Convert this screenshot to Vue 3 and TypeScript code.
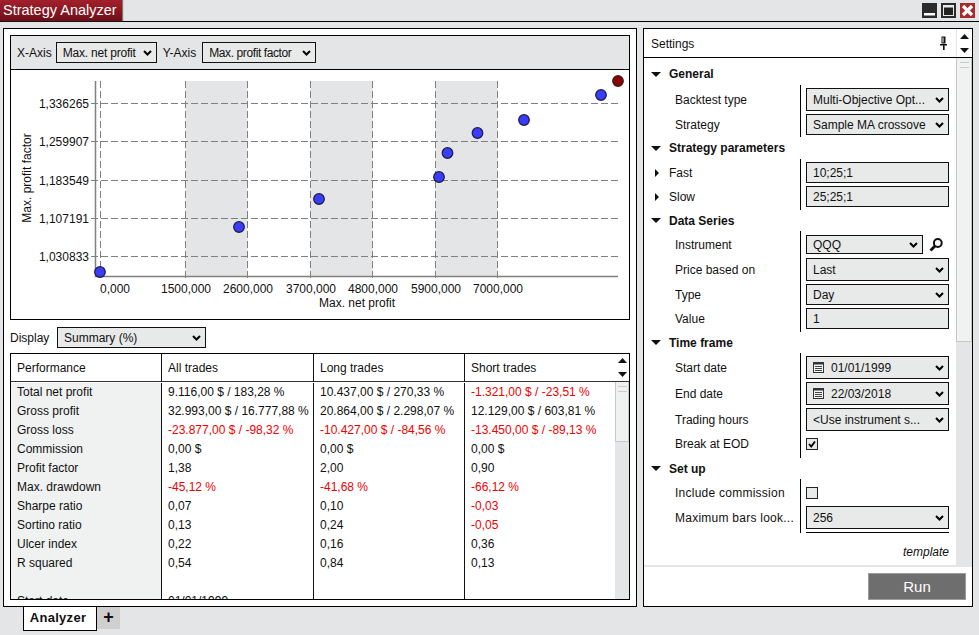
<script setup lang="ts">
type Row = { label: string; kind: string; value?: string; h: number; arrow?: boolean; checked?: boolean; wide?: boolean };
type Section = { title: string; head: number; pb: number; rows: Row[]; rule?: boolean };

const sections: Section[] = [
  { title: 'General', head: 22, pb: 2, rows: [
    { label: 'Backtest type', kind: 'select', value: 'Multi-Objective Opt...', h: 23 },
    { label: 'Strategy', kind: 'select', value: 'Sample MA crossove', h: 21 },
  ] },
  { title: 'Strategy parameters', head: 22, pb: 3, rows: [
    { label: 'Fast', kind: 'text', value: '10;25;1', h: 21, arrow: true },
    { label: 'Slow', kind: 'text', value: '25;25;1', h: 21, arrow: true },
  ] },
  { title: 'Data Series', head: 21, pb: 3, rows: [
    { label: 'Instrument', kind: 'search', value: 'QQQ', h: 21 },
    { label: 'Price based on', kind: 'select', value: 'Last', h: 23 },
    { label: 'Type', kind: 'select', value: 'Day', h: 21 },
    { label: 'Value', kind: 'text', value: '1', h: 21 },
  ] },
  { title: 'Time frame', head: 21, pb: 4, rows: [
    { label: 'Start date', kind: 'date', value: '01/01/1999', h: 23 },
    { label: 'End date', kind: 'date', value: '22/03/2018', h: 23 },
    { label: 'Trading hours', kind: 'select', value: '<Use instrument s...', h: 23 },
    { label: 'Break at EOD', kind: 'check', checked: true, h: 20 },
  ] },
  { title: 'Set up', head: 21, pb: 0, rule: true, rows: [
    { label: 'Include commission', kind: 'check', checked: false, h: 21, wide: true },
    { label: 'Maximum bars look...', kind: 'select', value: '256', h: 23, wide: true },
  ] },
];

type Cell = { t: string; neg?: boolean };
const c = (t: string): Cell => ({ t, neg: t.startsWith('-') });
const perf: { name: string; cells: Cell[] }[] = [
  { name: 'Total net profit', cells: [c('9.116,00 $ / 183,28 %'), c('10.437,00 $ / 270,33 %'), c('-1.321,00 $ / -23,51 %')] },
  { name: 'Gross profit', cells: [c('32.993,00 $ / 16.777,88 %'), c('20.864,00 $ / 2.298,07 %'), c('12.129,00 $ / 603,81 %')] },
  { name: 'Gross loss', cells: [c('-23.877,00 $ / -98,32 %'), c('-10.427,00 $ / -84,56 %'), c('-13.450,00 $ / -89,13 %')] },
  { name: 'Commission', cells: [c('0,00 $'), c('0,00 $'), c('0,00 $')] },
  { name: 'Profit factor', cells: [c('1,38'), c('2,00'), c('0,90')] },
  { name: 'Max. drawdown', cells: [c('-45,12 %'), c('-41,68 %'), c('-66,12 %')] },
  { name: 'Sharpe ratio', cells: [c('0,07'), c('0,10'), c('-0,03')] },
  { name: 'Sortino ratio', cells: [c('0,13'), c('0,24'), c('-0,05')] },
  { name: 'Ulcer index', cells: [c('0,22'), c('0,16'), c('0,36')] },
  { name: 'R squared', cells: [c('0,54'), c('0,84'), c('0,13')] },
  { name: '', cells: [c(''), c(''), c('')] },
  { name: 'Start date', cells: [c('01/01/1999'), c(''), c('')] },
];

const bands = [[185.5, 247.5], [310.5, 372.5], [435.5, 497.5]];
const vLines = [100.5, 185.5, 247.5, 310.5, 372.5, 435.5, 497.5];
const hTicks = [
  { y: 103.5, t: '1,336265' }, { y: 141.5, t: '1,259907' }, { y: 180.5, t: '1,183549' },
  { y: 218.5, t: '1,107191' }, { y: 256.5, t: '1,030833' },
];
const xTicks = [
  { x: 115, t: '0,000' }, { x: 186, t: '1500,000' }, { x: 248, t: '2600,000' }, { x: 311, t: '3700,000' },
  { x: 373, t: '4800,000' }, { x: 436, t: '5900,000' }, { x: 498, t: '7000,000' },
];
const dots = [[100, 272], [239, 227], [319, 199], [439, 177], [447.5, 153], [477.5, 133], [524, 120], [601, 95]];
</script>

<template>
  <div class="app">
    <header class="titlebar">
      <div class="title">Strategy Analyzer</div>
      <div class="winbtns">
        <span class="wbtn"><svg width="15" height="15"><rect x="2" y="10" width="11" height="2.5" fill="#fff" /></svg></span>
        <span class="wbtn"><svg width="15" height="15"><rect x="2.5" y="3" width="10" height="9.5" fill="#222" stroke="#e8e8e8" /><rect x="2" y="2" width="11" height="2.5" fill="#e8e8e8" /></svg></span>
        <span class="wbtn close"><svg width="15" height="15"><path d="M3 3l9 9M12 3l-9 9" stroke="#fff" stroke-width="3.2" /></svg></span>
      </div>
    </header>

    <main class="main">
      <section class="panel left">
        <div class="chartbox">
          <div class="charthead">
            <span>X-Axis</span>
            <div class="sel axis-x"><span class="sel-text">Max. net profit</span><svg class="chev" width="9" height="6"><path d="M1 1l3.5 3.5L8 1" fill="none" stroke="#000" stroke-width="2" /></svg></div>
            <span>Y-Axis</span>
            <div class="sel axis-y"><span class="sel-text">Max. profit factor</span><svg class="chev" width="9" height="6"><path d="M1 1l3.5 3.5L8 1" fill="none" stroke="#000" stroke-width="2" /></svg></div>
          </div>
          <svg class="plot" width="618" height="249" viewBox="11 70 618 249">
            <rect v-for="b in bands" :key="b[0]" :x="b[0]" y="81" :width="b[1] - b[0]" height="195" fill="#e4e5e6" />
            <line v-for="x in vLines" :key="x" :x1="x" :x2="x" y1="81" y2="280" class="dash" />
            <line v-for="h in hTicks" :key="h.y" x1="91" x2="618" :y1="h.y" :y2="h.y" class="dash" />
            <line x1="95.5" x2="95.5" y1="81" y2="277" class="axis" />
            <line x1="95" x2="618" y1="276.5" y2="276.5" class="axis" />
            <text v-for="h in hTicks" :key="h.t" x="89" :y="h.y + 4.5" text-anchor="end" class="lbl">{{ h.t }}</text>
            <text v-for="t in xTicks" :key="t.t" :x="t.x" y="293" text-anchor="middle" class="lbl">{{ t.t }}</text>
            <text x="357" y="307" text-anchor="middle" class="lbl">Max. net profit</text>
            <text transform="translate(31 178) rotate(-90)" text-anchor="middle" class="lbl">Max. profit factor</text>
            <circle v-for="d in dots" :key="d[0]" :cx="d[0]" :cy="d[1]" r="5.3" fill="#3c3cff" stroke="#1b1b3c" stroke-width="1.2" />
            <circle cx="618" cy="81" r="5.3" fill="#8b0000" stroke="#3c2020" stroke-width="1.2" />
          </svg>
        </div>

        <div class="display">
          <span>Display</span>
          <div class="sel display-sel"><span class="sel-text">Summary (%)</span><svg class="chev" width="9" height="6"><path d="M1 1l3.5 3.5L8 1" fill="none" stroke="#000" stroke-width="2" /></svg></div>
        </div>

        <div class="table">
          <div class="table-main">
            <div class="thead">
              <div class="th first">Performance</div>
              <div class="th">All trades</div>
              <div class="th">Long trades</div>
              <div class="th last">Short trades</div>
            </div>
            <div class="tbody">
              <div v-for="(r, i) in perf" :key="i" class="tr">
                <div class="td first">{{ r.name }}</div>
                <div v-for="(cell, j) in r.cells" :key="j" class="td" :class="{ neg: cell.neg, last: j === 2 }">{{ cell.t }}</div>
              </div>
            </div>
          </div>
          <div class="scroll">
            <div class="scroll-btns tall">
              <svg width="9" height="5"><path d="M0 5L4.5 0 9 5z" /></svg>
              <svg width="9" height="5"><path d="M0 0l4.5 5L9 0z" /></svg>
            </div>
            <div class="track"><div class="thumb short"><i /></div></div>
          </div>
        </div>
      </section>

      <section class="panel right">
        <div class="sethead">
          <span class="settitle">Settings</span>
          <svg class="pin" width="7" height="14" viewBox="0 0 7 14"><path d="M1.5 .5h4v7h-4zM0 8h7v1.5H0zM3 9h1.6v5H3z" fill="#111" /><path d="M2.5 1.5h1v5h-1z" fill="#fff" /></svg>
          <div class="scroll-btns head-arrows">
            <svg width="9" height="5"><path d="M0 5L4.5 0 9 5z" /></svg>
            <svg width="9" height="5"><path d="M0 0l4.5 5L9 0z" /></svg>
          </div>
        </div>
        <div class="setbody">
          <div class="setlist">
            <template v-for="s in sections" :key="s.title">
              <div class="sec" :style="{ height: s.head + 'px' }">
                <svg width="10" height="5" class="tri"><path d="M0 0h10L5 5z" fill="#111" /></svg>
                <span>{{ s.title }}</span>
              </div>
              <div class="group" :style="{ paddingBottom: s.pb + 'px' }">
                <div v-for="r in s.rows" :key="r.label" class="row" :style="{ height: r.h + 'px' }">
                  <div class="lab" :class="{ sub: r.arrow, wide: r.wide }">
                    <svg v-if="r.arrow" width="4" height="8" class="tri2"><path d="M0 0l4 4-4 4z" fill="#111" /></svg>
                    <span>{{ r.label }}</span>
                  </div>
                  <div v-if="r.kind === 'check'" class="checkwrap">
                    <div class="check">
                      <svg v-if="r.checked" width="10" height="10"><path d="M2 5l2.2 2.5L8 2.5" fill="none" stroke="#000" stroke-width="1.8" /></svg>
                    </div>
                  </div>
                  <div v-else-if="r.kind === 'text'" class="sel field"><span class="sel-text">{{ r.value }}</span></div>
                  <div v-else-if="r.kind === 'search'" class="searchwrap">
                    <div class="sel field short-field">
                      <span class="sel-text">{{ r.value }}</span>
                      <svg class="chev" width="9" height="6"><path d="M1 1l3.5 3.5L8 1" fill="none" stroke="#000" stroke-width="2" /></svg>
                    </div>
                    <svg width="14" height="14" viewBox="0 0 14 14"><circle cx="8.8" cy="5" r="3.9" fill="none" stroke="#111" stroke-width="2" /><path d="M6 8l-4.5 4.5" stroke="#111" stroke-width="2.8" /></svg>
                  </div>
                  <div v-else class="sel field">
                    <svg v-if="r.kind === 'date'" class="cal" width="11" height="11" viewBox="0 0 11 11"><rect x=".5" y=".5" width="10" height="10" fill="#f4f4f4" stroke="#333" /><rect x="0" y="0" width="11" height="2.5" fill="#333" /><path d="M2 4.5h7M2 6.5h7M2 8.5h7" stroke="#444" /></svg>
                    <span class="sel-text">{{ r.value }}</span>
                    <svg class="chev" width="9" height="6"><path d="M1 1l3.5 3.5L8 1" fill="none" stroke="#000" stroke-width="2" /></svg>
                  </div>
                </div>
                <div v-if="s.rule" class="rule" />
              </div>
            </template>
            <div class="template">template</div>
          </div>
          <div class="scroll setscroll">
            <div class="track"><div class="thumb long"><i /></div></div>
          </div>
        </div>
        <div class="setfoot"><div class="run">Run</div></div>
      </section>
    </main>

    <footer class="tabs">
      <div class="tab">Analyzer</div>
      <div class="plus">+</div>
    </footer>
  </div>
</template>

<style>
html, body { margin: 0; background: #e4e5e6; }
</style>

<style scoped>
.app {
  width: 979px; height: 635px; overflow: hidden; background: #e4e5e6;
  display: flex; flex-direction: column;
  font-family: "Liberation Sans", Arial, sans-serif; font-size: 12px; color: #111;
}
.titlebar { height: 21px; border-bottom: 1px solid #000; display: flex; justify-content: space-between; flex: none; }
.title {
  width: 122px; height: 21px; box-sizing: border-box; padding: 1px 0 0 3px; color: #fff; font-size: 14.5px; line-height: 19px;
  background: linear-gradient(#a2202c, #6f0f18); box-shadow: 1px 0 1px #777; white-space: nowrap;
}
.winbtns { display: flex; gap: 4px; padding: 3px 4px 0 0; }
.wbtn { width: 15px; height: 15px; background: #2b2b2b; display: block; }
.wbtn svg { display: block; }
.wbtn.close { background: #a82a2a; }
.main { display: flex; gap: 6px; padding: 6px 0 0 3px; flex: none; }
.panel { height: 579px; box-sizing: border-box; border: 1px solid #000; background: #fff; display: flex; flex-direction: column; }
.left { width: 634px; padding: 6px 6px 6px 6px; }
.right { width: 330px; }
.chartbox { height: 285px; box-sizing: border-box; border: 1px solid #000; flex: none; }
.charthead {
  height: 34px; box-sizing: border-box; border-bottom: 1px solid #000; background: #e4e5e6;
  display: flex; align-items: center; gap: 4px; padding: 0 0 0 6px;
}
.plot { display: block; }
.dash { stroke: #808080; stroke-width: 1; stroke-dasharray: 7 3; fill: none; }
.axis { stroke: #808080; stroke-width: 1.5; }
.lbl { font-size: 12px; fill: #111; font-family: "Liberation Sans", Arial, sans-serif; }
.sel {
  box-sizing: border-box; border: 1px solid #111; background: #e8e9e9; display: flex; align-items: center;
  padding: 0 4px 0 6px; overflow: hidden;
}
.sel-text { flex: 1; white-space: nowrap; overflow: hidden; }
.chev { flex: none; margin-left: 3px; }
.axis-x { width: 101px; height: 21px; margin-right: 2px; letter-spacing: -.2px; }
.axis-y { width: 114px; height: 21px; margin-left: 2px; letter-spacing: -.4px; }
.display { height: 33px; flex: none; display: flex; align-items: center; gap: 7px; box-sizing: border-box; padding-top: 2px; }
.display-sel { width: 149px; height: 21px; }
.display span:first-child { width: 40px; }
.table { height: 247px; box-sizing: border-box; border: 1px solid #000; display: flex; flex: none; width: 620px; }
.table-main { width: 604px; display: flex; flex-direction: column; }
.thead { display: grid; grid-template-columns: 151px 152px 151px 150px; height: 28px; box-sizing: border-box; border-bottom: 1px solid #333; flex: none; }
.th { padding-left: 6px; line-height: 28px; border-right: 1px solid #111; }
.th.last { border-right: 0; }
.tbody { flex: 1; overflow: hidden; padding-top: 1px; }
.tr { display: grid; grid-template-columns: 151px 152px 151px 150px; height: 19px; }
.td { padding-left: 6px; line-height: 19px; border-right: 1px solid #111; white-space: nowrap; overflow: hidden; }
.td.first { background: #f0f1f1; }
.td.last { border-right: 0; }
.neg { color: #f00000; }
.scroll { width: 14px; flex: none; display: flex; flex-direction: column; border-left: 0; }
.scroll-btns { display: flex; flex-direction: column; align-items: center; justify-content: center; gap: 9px; flex: none; }
.scroll-btns svg { display: block; fill: #111; }
.tall { height: 28px; border-bottom: 1px solid #333; box-sizing: border-box; }
.track { flex: 1; background: #e4e5e6; overflow: hidden; }
.thumb { box-sizing: border-box; background: #f0f1f1; border: 1px solid #c8c8c8; border-top: 0; display: flex; justify-content: center; padding-top: 4px; }
.thumb i { display: block; width: 9px; height: 4px; border-top: 1px solid #ccc; border-bottom: 1px solid #ccc; }
.thumb.short { height: 60px; }
.thumb.long { height: 284px; }
.sethead { height: 29px; box-sizing: border-box; border-bottom: 1px solid #000; display: flex; align-items: center; flex: none; padding-left: 7px; }
.settitle { flex: 1; padding-top: 1px; }
.pin { margin-right: 9px; }
.head-arrows { width: 15px; height: 100%; border-left: 1px solid #e4e5e6; }
.setbody { height: 509px; display: flex; flex: none; border-bottom: 2px solid #e4e5e6; box-sizing: border-box; }
.setlist { width: 312px; flex: none; padding-top: 5px; box-sizing: border-box; }
.setscroll { width: 16px; }
.sec { display: flex; align-items: center; font-weight: bold; padding-left: 7px; }
.tri { margin-right: 8px; flex: none; }
.group {
  display: flex; flex-direction: column; gap: 3px; padding-top: 3px;
  background: linear-gradient(#000, #000) no-repeat 156px 0 / 1px 100%;
}
.row { display: flex; align-items: center; }
.lab { width: 162px; flex: none; padding-left: 31px; box-sizing: border-box; white-space: nowrap; overflow: hidden; }
.lab.wide { letter-spacing: .25px; }
.lab.sub { padding-left: 11px; display: flex; align-items: center; }
.tri2 { margin-right: 10px; flex: none; }
.field { width: 143px; height: 100%; }
.searchwrap { display: flex; align-items: center; gap: 6px; height: 100%; }
.short-field { width: 117px; height: 19px; }
.cal { flex: none; margin-right: 7px; }
.checkwrap { display: flex; align-items: center; }
.check { width: 12px; height: 12px; box-sizing: border-box; border: 1px solid #222; background: #e8e9e9; display: flex; align-items: center; justify-content: center; }
.rule { height: 1px; width: 143px; margin-left: 162px; background: #000; }
.template { text-align: right; font-style: italic; padding: 12px 7px 0 0; }
.setfoot { flex: 1; display: flex; justify-content: flex-end; align-items: flex-start; padding: 6px 6px 0 0; }
.run { width: 98px; height: 27px; box-sizing: border-box; background: #6e6e6e; border: 1px solid #9c9c9c; color: #fff; font-size: 15px; text-align: center; line-height: 25px; }
.tabs { display: flex; padding-left: 23px; flex: none; align-items: flex-start; }
.tab {
  width: 74px; height: 24px; box-sizing: border-box; background: #fff; border: 1px solid #000; border-top: 0;
  font-weight: bold; font-size: 13px; letter-spacing: .3px; text-align: center; line-height: 22px; padding-right: 4px;
}
.plus { width: 23px; height: 22px; background: #cfcfcf; text-align: center; font-size: 18px; font-weight: bold; line-height: 21px; }
</style>
